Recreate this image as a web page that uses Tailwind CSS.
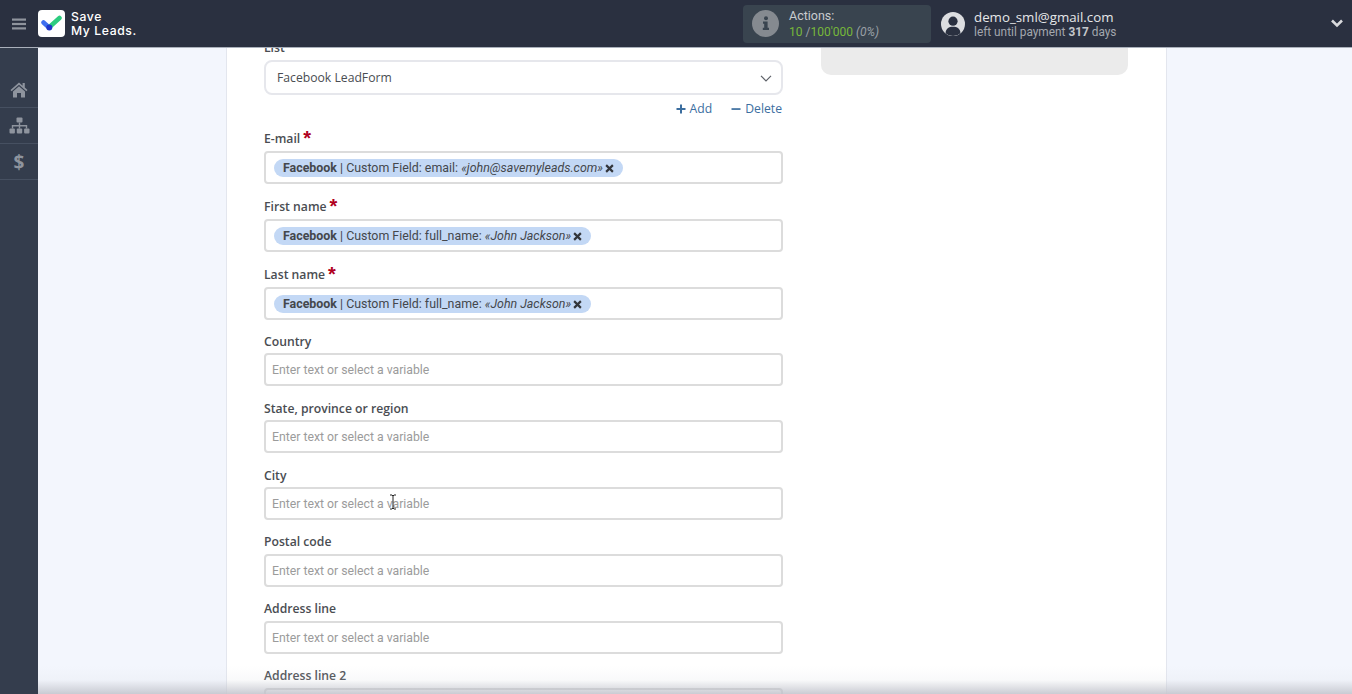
<!DOCTYPE html>
<html lang="en">
<head>
  <meta charset="UTF-8" />
  <title>Save My Leads</title>
  <script src="https://cdn.jsdelivr.net/npm/@tailwindcss/browser@4"></script>
</head>
<body class="h-[694px] overflow-hidden bg-[#f3f6fd] font-['Open_Sans',sans-serif] text-[#4a4d52]">
  <div class="relative flex h-[694px] flex-col overflow-hidden">
    <!-- top bar -->
    <header class="relative z-10 flex h-[48px] shrink-0 items-center border-b border-[#aab0bb] bg-[#2a3040] text-white">
      <div class="flex w-[38px] justify-center">
        <svg width="14" height="12" viewBox="0 0 14 12" fill="#8f949d"><rect width="14" height="2.2" y="0.5"/><rect width="14" height="2.2" y="4.9"/><rect width="14" height="2.2" y="9.3"/></svg>
      </div>
      <div class="flex h-[27px] w-[27px] items-center justify-center rounded-[4px] bg-white">
        <svg width="21" height="17" viewBox="0 0 21 17" fill="none" stroke-linecap="round">
          <path d="M2.5 7.5 L8 12.5" stroke="#3f6ff0" stroke-width="4.5"/>
          <path d="M8.5 12 L18.5 3" stroke="#2dcc7f" stroke-width="4.5"/>
          <circle cx="8.3" cy="12.5" r="3" fill="#1f35c9"/>
        </svg>
      </div>
      <div class="ml-[6px] font-['Inter',sans-serif] text-[12.2px] leading-[14px] font-medium tracking-[0.6px]">Save<br />My Leads.</div>

      <div class="ml-auto flex h-[38px] w-[188px] items-center rounded-[4px] bg-[#39444f] pl-[9px]">
        <div class="flex h-[27px] w-[27px] items-center justify-center rounded-full bg-[#858a90]">
          <svg width="8" height="15" viewBox="0 0 8 15" fill="#39444f"><circle cx="4" cy="2.2" r="2"/><path d="M1 5.5h4.6v6.3H7V14H.8v-2.2h1.4V7.7H1z"/></svg>
        </div>
        <div class="ml-[10px] font-['Roboto',sans-serif] text-[12px] leading-[16px] text-[#c9ccd0]">
          <div class="text-[12.5px]">Actions:</div>
          <div><span class="text-[#77b83a]">10</span> <span class="text-[#9aa0a6]">/</span><span class="text-[#77b83a]">100'000</span> <i class="text-[#9aa0a6]">(0%)</i></div>
        </div>
      </div>
      <div class="ml-[10px] flex h-[24px] w-[24px] items-center justify-center overflow-hidden rounded-full bg-[#dcdde0]">
        <svg width="24" height="24" viewBox="0 0 26 26" fill="#2a3040"><circle cx="13" cy="10" r="5"/><path d="M5 23c0-5 3.5-7 8-7s8 2 8 7c-2 2-5 3-8 3s-6-1-8-3z"/></svg>
      </div>
      <div class="mt-[1px] ml-[9px] w-[357px]">
        <div class="text-[13.3px] leading-[16px] text-[#e6e7e9]">demo_sml@gmail.com</div>
        <div class="font-['Roboto',sans-serif] text-[11.85px] leading-[15px] text-[#a3a7ae]">left until payment <b class="font-bold text-[#c4c7cb]">317</b> days</div>
      </div>
      <svg class="mr-[9px]" width="12" height="9" viewBox="0 0 12 9" fill="none" stroke="#d9dadd" stroke-width="2.6"><path d="M1 1.5 L6 6.5 L11 1.5"/></svg>
    </header>

    <div class="flex min-h-0 flex-1">
      <!-- sidebar -->
      <nav class="w-[38px] shrink-0 bg-[#343d4d] pt-[24px]">
        <div class="flex h-[36px] items-center justify-center border-b border-[#465061]">
          <svg width="18" height="16" viewBox="0 0 18 16" fill="#8e949e"><path d="M9 0.5 L0.5 8 L1.6 9.2 L9 2.8 L16.4 9.2 L17.5 8 L14.8 5.6 V1 H12.6 V3.7z"/><path d="M3 9.4 L9 4.3 L15 9.4 V15.5 H11 V11 H7 V15.5 H3z"/></svg>
        </div>
        <div class="flex h-[36px] items-center justify-center border-b border-[#465061]">
          <svg width="21" height="17" viewBox="0 0 21 17" fill="#8e949e"><rect x="7.5" y="0.5" width="6" height="5" rx="1"/><rect x="0.5" y="11.5" width="5.4" height="5" rx="1"/><rect x="7.8" y="11.5" width="5.4" height="5" rx="1"/><rect x="15.1" y="11.5" width="5.4" height="5" rx="1"/><path d="M9.8 5.5h1.4v2.5h7v3.5h-1.4V9.4h-5.6v2.1H9.8V9.4H4.2v2.1H2.8V8h7z"/></svg>
        </div>
        <div class="flex h-[36px] items-center justify-center border-b border-[#465061] pt-[1px] text-[19px] font-bold text-[#8e949e]">$</div>
      </nav>

      <!-- page -->
      <main class="ml-[188px] flex h-[646px] w-[941px] shrink-0 overflow-hidden border-x border-[#e3e6ee] bg-white pl-[37px]">
        <!-- form column -->
        <form class="-mt-[11px] w-[519px] shrink-0 text-[12.2px]">
          <div class="h-[23px] pt-[2px] leading-[18px] font-semibold">List</div>
          <div class="flex h-[35px] items-center justify-between rounded-[8px] border-2 border-[#e6e7ec] pt-[1px] pr-[9px] pl-[11px]">
            Facebook LeadForm
            <svg width="12" height="7" viewBox="0 0 12 7" fill="none" stroke="#5d6168" stroke-width="1.2"><path d="M1 0.8 L6 5.8 L11 0.8"/></svg>
          </div>
          <div class="mt-[6px] flex h-[16px] items-center justify-end gap-[19px] pr-[1px] leading-[16px] text-[#3c6e9f]">
            <span class="flex items-center gap-[4px]"><svg width="10" height="10" viewBox="0 0 10 10" fill="#3c6e9f"><path d="M4 0.5h2V4h3.5v2H6v3.5H4V6H.5V4H4z"/></svg>Add</span>
            <span class="flex items-center gap-[4px]"><svg width="10" height="10" viewBox="0 0 10 10" fill="#3c6e9f"><rect x="0.5" y="4.2" width="9" height="1.7"/></svg>Delete</span>
          </div>

          <div class="mt-[12px] flex h-[22px] items-start">
            <label class="leading-[20px] font-semibold">E-mail</label><span class="ml-[3px] font-['Liberation_Sans',sans-serif] text-[20px] leading-[18px] font-bold text-[#b00020]">*</span>
          </div>
          <div class="flex h-[33px] items-center rounded-[4px] border-2 border-[#dcdcdc] pt-[1px] pl-[8px] font-['Roboto',sans-serif] text-[12.4px] text-[#44474c]">
            <span class="flex h-[18px] items-center rounded-full bg-[#c3d8f5] px-[9px]"><b class="font-bold">Facebook</b>&nbsp;| Custom Field: email:&nbsp;<i>«john@savemyleads.com»</i><svg class="ml-[2px]" width="9" height="9" viewBox="0 0 8 8" stroke="#33363b" stroke-width="1.9"><path d="M1 1 L7 7 M7 1 L1 7"/></svg></span>
          </div>

          <div class="mt-[13px] flex h-[22px] items-start">
            <label class="leading-[20px] font-semibold">First name</label><span class="ml-[3px] font-['Liberation_Sans',sans-serif] text-[20px] leading-[18px] font-bold text-[#b00020]">*</span>
          </div>
          <div class="flex h-[33px] items-center rounded-[4px] border-2 border-[#dcdcdc] pt-[1px] pl-[8px] font-['Roboto',sans-serif] text-[12.4px] text-[#44474c]">
            <span class="flex h-[18px] items-center rounded-full bg-[#c3d8f5] px-[9px]"><b class="font-bold">Facebook</b>&nbsp;| Custom Field: full_name:&nbsp;<i>«John Jackson»</i><svg class="ml-[2px]" width="9" height="9" viewBox="0 0 8 8" stroke="#33363b" stroke-width="1.9"><path d="M1 1 L7 7 M7 1 L1 7"/></svg></span>
          </div>

          <div class="mt-[13px] flex h-[22px] items-start">
            <label class="leading-[20px] font-semibold">Last name</label><span class="ml-[3px] font-['Liberation_Sans',sans-serif] text-[20px] leading-[18px] font-bold text-[#b00020]">*</span>
          </div>
          <div class="flex h-[33px] items-center rounded-[4px] border-2 border-[#dcdcdc] pt-[1px] pl-[8px] font-['Roboto',sans-serif] text-[12.4px] text-[#44474c]">
            <span class="flex h-[18px] items-center rounded-full bg-[#c3d8f5] px-[9px]"><b class="font-bold">Facebook</b>&nbsp;| Custom Field: full_name:&nbsp;<i>«John Jackson»</i><svg class="ml-[2px]" width="9" height="9" viewBox="0 0 8 8" stroke="#33363b" stroke-width="1.9"><path d="M1 1 L7 7 M7 1 L1 7"/></svg></span>
          </div>

          <div class="mt-[12px] h-[21px] leading-[19px] font-semibold">Country</div>
          <div class="flex h-[33px] items-center rounded-[4px] border-2 border-[#dcdcdc] pt-[1px] pl-[6px] font-['Roboto',sans-serif] text-[12.25px] text-[#9b9b9b]">Enter text or select a variable</div>

          <div class="mt-[13px] h-[21px] leading-[19px] font-semibold">State, province or region</div>
          <div class="flex h-[33px] items-center rounded-[4px] border-2 border-[#dcdcdc] pt-[1px] pl-[6px] font-['Roboto',sans-serif] text-[12.25px] text-[#9b9b9b]">Enter text or select a variable</div>

          <div class="mt-[13px] h-[21px] leading-[19px] font-semibold">City</div>
          <div class="flex h-[33px] items-center rounded-[4px] border-2 border-[#dcdcdc] pt-[1px] pl-[6px] font-['Roboto',sans-serif] text-[12.25px] text-[#9b9b9b]">Enter text or select a variable</div>

          <div class="mt-[12px] h-[22px] leading-[19px] font-semibold">Postal code</div>
          <div class="flex h-[33px] items-center rounded-[4px] border-2 border-[#dcdcdc] pt-[1px] pl-[6px] font-['Roboto',sans-serif] text-[12.25px] text-[#9b9b9b]">Enter text or select a variable</div>

          <div class="mt-[12px] h-[22px] leading-[19px] font-semibold">Address line</div>
          <div class="flex h-[33px] items-center rounded-[4px] border-2 border-[#dcdcdc] pt-[1px] pl-[6px] font-['Roboto',sans-serif] text-[12.25px] text-[#9b9b9b]">Enter text or select a variable</div>

          <div class="mt-[12px] h-[22px] leading-[19px] font-semibold">Address line 2</div>
          <div class="flex h-[33px] items-center rounded-[4px] border-2 border-[#d0d0d0] pl-[6px]"></div>
        </form>

        <!-- right card, scrolled mostly out of view -->
        <aside class="ml-[38px] h-[27px] w-[307px] shrink-0 rounded-b-[10px] bg-[#ebebeb]"></aside>
      </main>
    </div>

    <!-- text cursor over the City field -->
    <svg class="absolute top-[494px] left-[389px] z-20" width="8" height="16" viewBox="0 0 8 16" fill="none" stroke="#222" stroke-width="1"><path d="M1 1 H3 L4 2 L5 1 H7 M4 2 V14 M1 15 H3 L4 14 L5 15 H7"/></svg>

    <!-- fade along the bottom edge -->
    <div class="pointer-events-none absolute right-0 bottom-0 left-[38px] z-10 h-[28px] bg-gradient-to-b from-transparent via-[#d8dae0]/15 to-[#c4c6ce]/90"></div>
  </div>
</body>
</html>
